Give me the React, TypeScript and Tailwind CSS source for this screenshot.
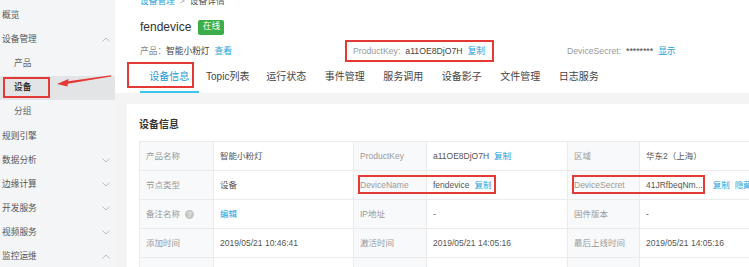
import React from "react";

const Chevron = ({ up }: { up?: boolean }) => (
  <svg width="8" height="5" viewBox="0 0 8 5" className="shrink-0">
    <polyline
      points={up ? "0.5,4.5 4,1 7.5,4.5" : "0.5,0.5 4,4 7.5,0.5"}
      fill="none"
      stroke="#b5b5b5"
      strokeWidth="0.9"
    />
  </svg>
);

const sideItems: { t: string; sub?: boolean; active?: boolean; chev?: "up" | "down" }[] = [
  { t: "概览" },
  { t: "设备管理", chev: "up" },
  { t: "产品", sub: true },
  { t: "设备", sub: true, active: true },
  { t: "分组", sub: true },
  { t: "规则引擎" },
  { t: "数据分析", chev: "down" },
  { t: "边缘计算", chev: "down" },
  { t: "开发服务", chev: "down" },
  { t: "视频服务", chev: "down" },
  { t: "监控运维", chev: "up" },
];

const tabs = ["设备信息", "Topic列表", "运行状态", "事件管理", "服务调用", "设备影子", "文件管理", "日志服务"];

const Link = ({ children, className = "" }: { children: React.ReactNode; className?: string }) => (
  <span className={`text-[#1a9fe0] ${className}`}>{children}</span>
);

const Label = ({ children }: { children?: React.ReactNode }) => (
  <div className="h-[29px] border-r border-b border-[#ebebeb] bg-[#f8f9fa] px-[6px] flex items-center text-[#999] whitespace-nowrap">
    {children}
  </div>
);
const Value = ({ children }: { children?: React.ReactNode }) => (
  <div className="h-[29px] border-r border-b border-[#ebebeb] bg-white px-[6px] flex items-center text-[#555] whitespace-nowrap">
    {children}
  </div>
);

export default function App() {
  return (
    <div className="relative w-[749px] h-[267px] overflow-hidden bg-white flex font-['Liberation_Sans','Noto_Sans_CJK_SC',sans-serif]">
      {/* Sidebar */}
      <div className="w-[115px] shrink-0 bg-[#f4f5f6] pt-[3px] flex flex-col">
        {sideItems.map((it) => (
          <div
            key={it.t}
            className={`h-[24.2px] shrink-0 flex items-center justify-between pr-[5px] text-[8.7px] ${
              it.sub ? "pl-[14px]" : "pl-[2px]"
            } ${it.active ? "bg-[#e3e4e5] text-[#333] font-bold" : it.sub ? "text-[#666]" : "text-[#555]"}`}
          >
            <span>{it.t}</span>
            {it.chev && <Chevron up={it.chev === "up"} />}
          </div>
        ))}
      </div>

      {/* Main */}
      <div className="flex-1 min-w-0 flex flex-col">
        <div className="pl-[25px] bg-white shrink-0">
          <div className="h-[14px] -mt-[5px] flex items-center text-[8.7px] whitespace-nowrap">
            <Link>设备管理</Link>
            <span className="mx-[5px] text-[#aaa]">&gt;</span>
            <span className="text-[#555]">设备详情</span>
          </div>
          <div className="h-[36px] flex items-center">
            <span className="text-[12px] text-[#333]">fendevice</span>
            <span className="ml-[7px] w-[26px] h-[15px] rounded-[2px] bg-[#3bae49] text-white text-[8.7px] flex items-center justify-center">
              在线
            </span>
          </div>
          <div className="h-[14px] flex items-center text-[8.7px] whitespace-nowrap">
            <div className="w-[213px] flex items-center">
              <span className="text-[#888]">产品：</span>
              <span className="text-[#444]">智能小粉灯</span>
              <Link className="ml-[5px]">查看</Link>
            </div>
            <div className="w-[214px] flex items-center">
              <span className="text-[#999]">ProductKey:</span>
              <span className="ml-[5px] text-[#444]">a11OE8DjO7H</span>
              <Link className="ml-[5px]">复制</Link>
            </div>
            <div className="flex items-center">
              <span className="text-[#999]">DeviceSecret:</span>
              <span className="ml-[5px] text-[#444]">********</span>
              <Link className="ml-[5px]">显示</Link>
            </div>
          </div>
          <div className="h-[34px] flex">
            {tabs.map((t, i) => (
              <div
                key={t}
                className={`w-[58.5px] shrink-0 h-full flex items-center justify-center pt-[2px] text-[10px] whitespace-nowrap border-b-2 ${
                  i === 0 ? "border-[#3ec3ea] text-[#1d9ad6]" : "border-transparent text-[#444]"
                }`}
              >
                {t}
              </div>
            ))}
          </div>
        </div>

        <div className="flex-1 bg-[#f4f4f5] pl-[12px] pt-[11px]">
          <div className="w-[900px] h-[300px] bg-white pl-[12px] pt-[13px]">
            <div className="h-[14px] flex items-center text-[10px] font-bold text-[#333] mb-[10px]">设备信息</div>
            <div className="grid grid-cols-[74px_140px_73px_141px_72px_300px] border-t border-l border-[#ebebeb] text-[8.5px]">
              <Label>产品名称</Label>
              <Value>智能小粉灯</Value>
              <Label>ProductKey</Label>
              <Value>
                a11OE8DjO7H<Link className="ml-[5px]">复制</Link>
              </Value>
              <Label>区域</Label>
              <Value>华东2（上海）</Value>

              <Label>节点类型</Label>
              <Value>设备</Value>
              <Label>DeviceName</Label>
              <Value>
                fendevice<Link className="ml-[5px]">复制</Link>
              </Value>
              <Label>DeviceSecret</Label>
              <Value>
                41JRfbeqNm...<Link className="ml-[10px]">复制</Link>
                <Link className="ml-[5px]">隐藏</Link>
              </Value>

              <Label>
                备注名称
                <span className="ml-[5px] w-[9px] h-[9px] rounded-full bg-[#c6c6c6] text-white text-[7px] leading-none flex items-center justify-center">
                  ?
                </span>
              </Label>
              <Value>
                <Link>编辑</Link>
              </Value>
              <Label>IP地址</Label>
              <Value>-</Value>
              <Label>固件版本</Label>
              <Value>-</Value>

              <Label>添加时间</Label>
              <Value>2019/05/21 10:46:41</Value>
              <Label>激活时间</Label>
              <Value>2019/05/21 14:05:16</Value>
              <Label>最后上线时间</Label>
              <Value>2019/05/21 14:05:16</Value>

              <Label />
              <Value />
              <Label />
              <Value />
              <Label />
              <Value />
            </div>
          </div>
        </div>
      </div>

      {/* Annotations */}
      <div className="absolute left-[3px] top-[77px] w-[47px] h-[21px] border-2 border-[#e53935]" />
      <div className="absolute left-[127px] top-[62px] w-[67px] h-[26px] border-2 border-[#e53935]" />
      <div className="absolute left-[345px] top-[40px] w-[149px] h-[22px] border-2 border-[#e53935]" />
      <div className="absolute left-[358px] top-[175px] w-[138px] h-[19px] border-2 border-[#e53935]" />
      <div className="absolute left-[572px] top-[175px] w-[133px] h-[19px] border-2 border-[#e53935]" />
      <svg className="absolute left-0 top-0" width="120" height="100" viewBox="0 0 120 100">
        <path
          d="M111 75.3 L68.2 81.2 L68.5 79 L57 84 L67.5 86.4 L67.8 83.8 L111.1 76.6 Z"
          fill="#e53935"
        />
      </svg>
    </div>
  );
}
